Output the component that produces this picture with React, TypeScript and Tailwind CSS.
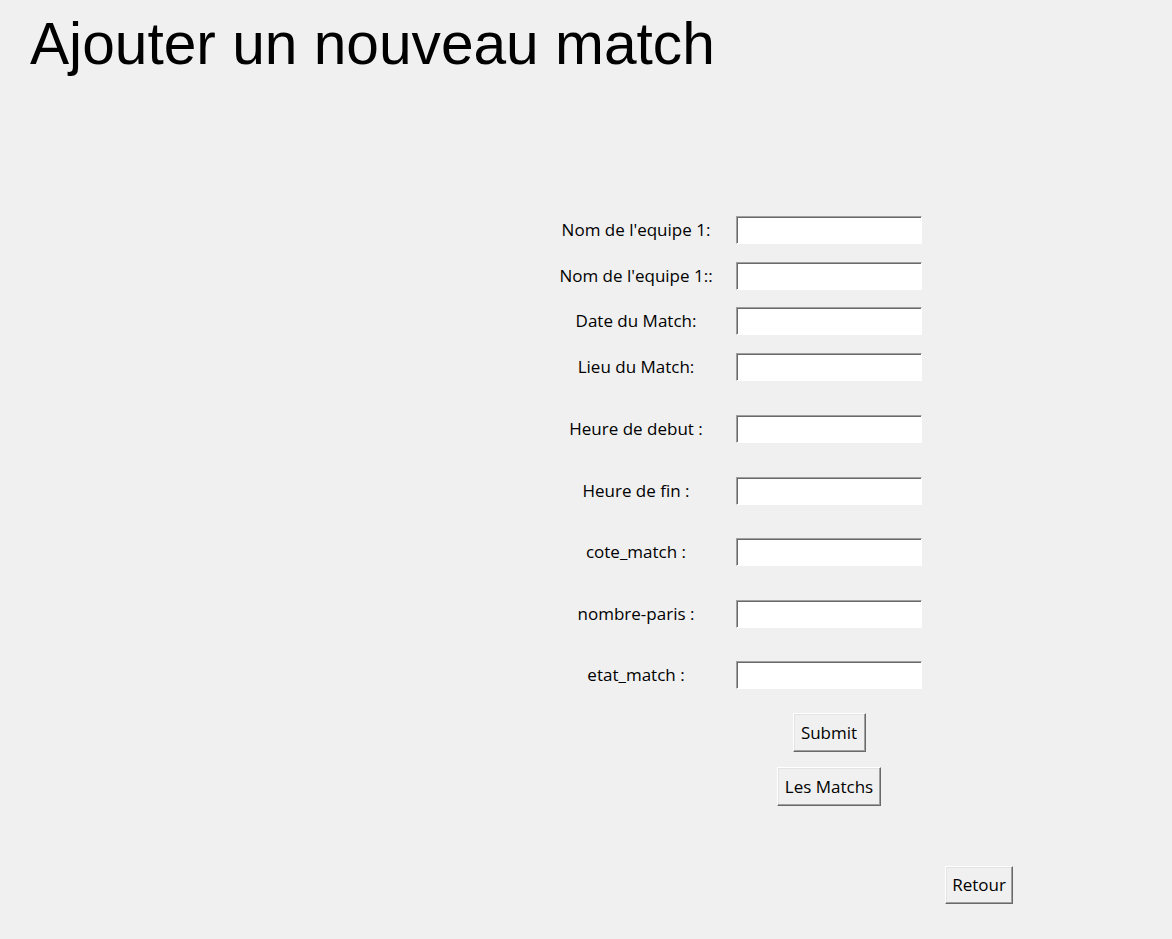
const fields = [
  { label: "Nom de l'equipe 1:", gap: "mt-0" },
  { label: "Nom de l'equipe 1::", gap: "mt-[18px]" },
  { label: "Date du Match:", gap: "mt-[17px]" },
  { label: "Lieu du Match:", gap: "mt-[18px]" },
  { label: "Heure de debut :", gap: "mt-[34px]" },
  { label: "Heure de fin :", gap: "mt-[34px]" },
  { label: "cote_match :", gap: "mt-[33px]" },
  { label: "nombre-paris :", gap: "mt-[34px]" },
  { label: "etat_match :", gap: "mt-[33px]" },
];

// tk-style raised button
const btn =
  "flex items-center justify-center bg-[#f0f0f0] text-black text-[17px] border border-t-white border-l-white border-r-[#696969] border-b-[#696969] shadow-[inset_-1px_-1px_0_#a0a0a0,inset_1px_1px_0_#e3e3e3]";

export default function App() {
  return (
    <main className="min-h-screen h-[939px] bg-[#f0f0f0] overflow-hidden font-['Open_Sans',sans-serif] text-black">
      {/* title */}
      <h1 className="ml-[30px] pt-[14px] font-['Liberation_Sans',Arial,sans-serif] text-[58.67px] leading-[59px] font-normal">
        Ajouter un nouveau match
      </h1>

      {/* form grid — labels centred in col 1, entries in col 2 */}
      <section className="mt-[143px] ml-[556px] flex flex-col">
        {fields.map((f) => (
          <div
            key={f.label}
            className={`grid grid-cols-[160px_186px] gap-x-[20px] items-center h-[28px] ${f.gap}`}
          >
            <span className="text-center text-[17px] leading-[28px] whitespace-nowrap">
              {f.label}
            </span>
            <input
              type="text"
              className="h-[28px] w-[186px] bg-white outline-none border-t border-l border-r border-b border-t-[#a0a0a0] border-l-[#a0a0a0] border-r-white border-b-white shadow-[inset_1px_1px_0_#696969]"
            />
          </div>
        ))}

        {/* actions under the entry column */}
        <div className="ml-[180px] w-[186px] flex flex-col items-center">
          <button className={`${btn} mt-[24px] w-[73px] h-[39px]`}>Submit</button>
          <button className={`${btn} mt-[15px] w-[104px] h-[39px]`}>Les Matchs</button>
        </div>

        <div className="ml-[389px] mt-[60px]">
          <button className={`${btn} w-[68px] h-[38px]`}>Retour</button>
        </div>
      </section>
    </main>
  );
}
